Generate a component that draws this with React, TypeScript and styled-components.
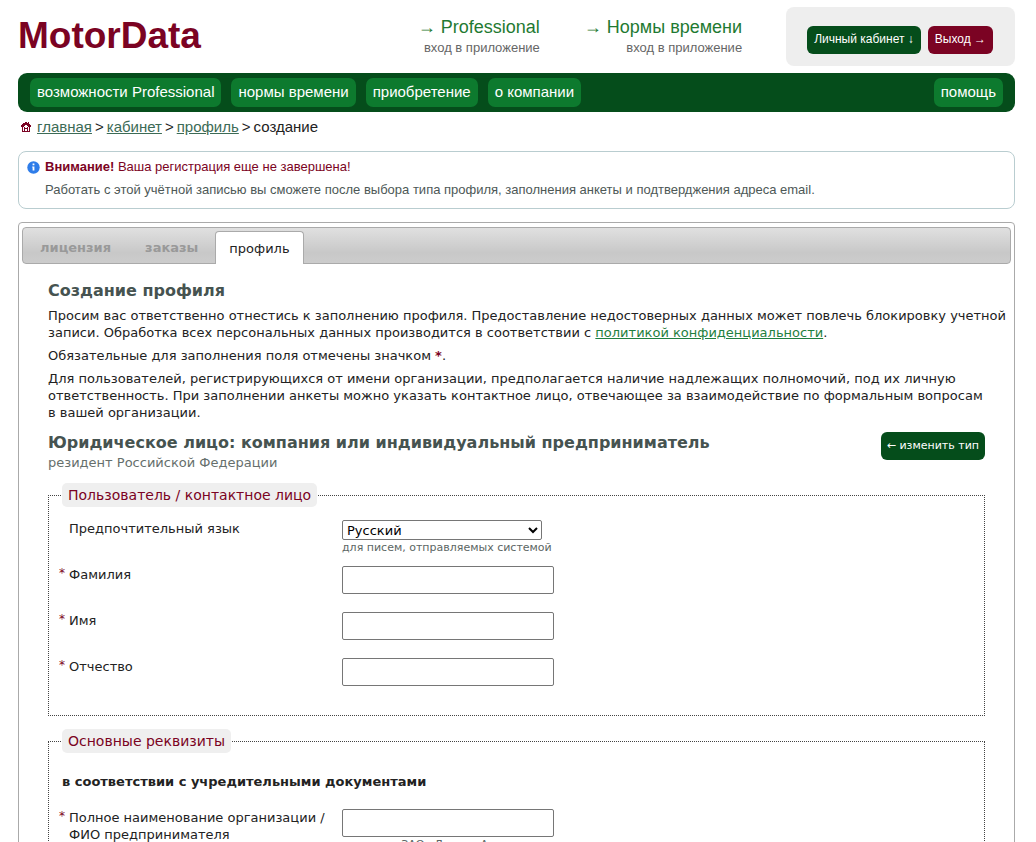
import React from "react";
import styled, { createGlobalStyle } from "styled-components";

const sans = `Arial, "Liberation Sans", sans-serif`;
const wide = `Verdana, "DejaVu Sans", sans-serif`;

const Global = createGlobalStyle`
  *, *::before, *::after { box-sizing: border-box; }
  body { margin: 0; background: #fff; color: #222; font: 13px/17px ${wide}; }
  h1, h2, h3, h4, p, ul, ol { margin: 0; padding: 0; }
  ul, ol { list-style: none; }
`;

const Page = styled.div`
  padding: 7px 21px 24px 18px;
`;

const Header = styled.header`
  display: flex;
  align-items: flex-start;
  font-family: ${sans};
  margin-bottom: 7px;
`;

const Logo = styled.h1`
  flex: 1;
  font-size: 37px;
  line-height: 58px;
  font-weight: bold;
  color: #7b0323;
`;

const AppLink = styled.div`
  text-align: right;
  padding-top: 9px;
  margin-right: 44px;
  white-space: nowrap;
  font-size: 13px;
  line-height: 20px;
  color: #666;
  a {
    display: block;
    font-size: 18px;
    line-height: 22px;
    color: #1f7a32;
    text-decoration: none;
  }
`;

const Account = styled.div`
  display: flex;
  gap: 7px;
  padding: 19px 22px 12px 21px;
  border-radius: 8px;
  background: #eee;
`;

const Button = styled.button<{ $tone?: "red" | "green"; $small?: boolean }>`
  height: 28px;
  padding: ${(p) => (p.$small ? "0 6px 2px" : "0 7px 2px")};
  border: 0;
  border-radius: 6px;
  white-space: nowrap;
  color: #fff;
  background: ${(p) => (p.$tone === "red" ? "#7b0323" : "#054d1b")};
  font: ${(p) => (p.$small ? `11px ${wide}` : `12px ${sans}`)};
`;

const Nav = styled.nav`
  display: flex;
  gap: 10px;
  padding: 5px 12px;
  border-radius: 9px;
  background: #054d1b;
`;

const NavLink = styled.a<{ $end?: boolean }>`
  padding: 0 7px 2px;
  margin-left: ${(p) => (p.$end ? "auto" : "0")};
  border-radius: 7px;
  background: #0d7a2e;
  color: #fff;
  font: 15px/27px ${sans};
  text-decoration: none;
  white-space: nowrap;
`;

const Crumbs = styled.ol`
  display: flex;
  align-items: center;
  padding: 5px 3px;
  font: 15px/20px ${sans};
  svg { margin-right: 6px; display: block; }
  a { color: #3c6b56; }
  li + li::before { content: ">"; margin: 0 3px; }
`;

const Notice = styled.section`
  display: grid;
  grid-template-columns: 13px 1fr;
  column-gap: 5px;
  row-gap: 3px;
  align-items: center;
  margin-top: 9px;
  padding: 5px 8px 8px;
  border: 1px solid #b9cdd0;
  border-radius: 8px;
  font: 13px/20px ${sans};
  p { color: #7b0323; }
  p + p { grid-column: 2; color: #4d5856; }
`;

const Panel = styled.main`
  margin-top: 13px;
  padding: 4px 3px 20px;
  border: 1px solid #aaa;
  border-radius: 4px;
`;

const Tabs = styled.ul`
  display: flex;
  align-items: flex-end;
  height: 37px;
  border: 1px solid #aaa;
  border-radius: 4px;
  background: linear-gradient(#e0e0e0, #c8c8c8 70%, #ccc);
`;

const Tab = styled.li<{ $active?: boolean }>`
  height: 33px;
  padding: 0 ${(p) => (p.$active ? "13px" : "16px")};
  margin-bottom: -1px;
  line-height: ${(p) => (p.$active ? "34px" : "31px")};
  border: 1px solid ${(p) => (p.$active ? "#aaa" : "transparent")};
  border-bottom: 0;
  border-radius: 4px 4px 0 0;
  background: ${(p) => (p.$active ? "#fff" : "transparent")};
  a {
    color: ${(p) => (p.$active ? "#222" : "#999")};
    font-weight: ${(p) => (p.$active ? "normal" : "bold")};
    text-decoration: none;
  }
`;

const Content = styled.div`
  padding: 16px 26px 0;
`;

const Title = styled.h2`
  font-size: 16px;
  line-height: 21px;
  color: #465350;
`;

const Text = styled.p`
  margin-top: 6px;
  white-space: nowrap;
  a { color: #1f8040; }
  b { color: #7b0323; }
`;

const TypeRow = styled.div`
  display: flex;
  justify-content: space-between;
  align-items: flex-start;
  margin: 11px 0 12px;
  color: #666f6c;
  p { margin-top: 1px; }
`;

const Group = styled.fieldset`
  min-width: 0;
  margin: 0 0 13px;
  padding: 13px 13px 11px 10px;
  border: 1px dotted #444;
`;

const Legend = styled.legend`
  margin-left: 3px;
  padding: 0 6px;
  border-radius: 5px;
  background: #efefef;
  color: #7b0323;
  font-size: 14px;
  line-height: 24px;
`;

const Subhead = styled.h4`
  padding: 7px 0 19px 3px;
  font-size: 13px;
  line-height: 17px;
`;

const Row = styled.div`
  display: grid;
  grid-template-columns: 10px 273px 1fr;
  min-height: 46px;
`;

const Star = styled.span`
  color: #7b0323;
  font-size: 12px;
  line-height: 14px;
`;

const Label = styled.label`
  padding-right: 10px;
`;

const Hint = styled.small<{ $center?: boolean }>`
  display: block;
  width: 212px;
  text-align: ${(p) => (p.$center ? "center" : "left")};
  white-space: nowrap;
  font-size: 11px;
  line-height: 15px;
  color: #5c6664;
`;

const Select = styled.select`
  display: block;
  width: 200px;
  height: 20px;
  border: 1px solid #767676;
  border-radius: 2px;
  background: #fff;
  color: #000;
  font: 13px ${wide};
`;

const Input = styled.input`
  display: block;
  width: 212px;
  height: 28px;
  border: 1px solid #767676;
  border-radius: 2px;
  background: #fff;
  font: 13px ${wide};
`;

const HomeIcon = () => (
  <svg width="10" height="10" viewBox="0 0 10 10" aria-hidden="true" shapeRendering="crispEdges" fill="#7b0323">
    <path
      d="M4 0h2v1h1V0h1v2h1v1h1v2H9v5H1V5H0V3h1V2h1V1h2zM4 3v1H3v1H2v4h1V5h1v1h2V5h1v4h1V5H7V4H6V3zM4 7v2h2V7z"
      fillRule="evenodd"
    />
  </svg>
);

const InfoIcon = () => (
  <svg width="13" height="13" viewBox="0 0 13 13" aria-hidden="true">
    <circle cx="6.5" cy="6.5" r="6.2" fill="#2f7de9" />
    <path d="M5.6 2.6h1.8v1.7H5.6zM5.2 5.4h2.2v4.2H5.6V6.6h-.4z" fill="#fff" />
  </svg>
);

const TextRow = ({ id, label, hint }: { id: string; label: React.ReactNode; hint?: string }) => (
  <Row>
    <Star>*</Star>
    <Label htmlFor={id}>{label}</Label>
    <div>
      <Input id={id} type="text" />
      {hint && <Hint $center>{hint}</Hint>}
    </div>
  </Row>
);

export default function App() {
  return (
    <>
      <Global />
      <Page>
        <Header>
          <Logo>MotorData</Logo>
          <AppLink><a href="#professional">→ Professional</a>вход в приложение</AppLink>
          <AppLink><a href="#norms">→ Нормы времени</a>вход в приложение</AppLink>
          <Account>
            <Button type="button">Личный кабинет ↓</Button>
            <Button type="button" $tone="red">Выход →</Button>
          </Account>
        </Header>
        <Nav>
          <NavLink href="#features">возможности Professional</NavLink>
          <NavLink href="#time">нормы времени</NavLink>
          <NavLink href="#buy">приобретение</NavLink>
          <NavLink href="#about">о компании</NavLink>
          <NavLink href="#help" $end>помощь</NavLink>
        </Nav>
        <Crumbs>
          <HomeIcon />
          <li><a href="#main">главная</a></li>
          <li><a href="#cabinet">кабинет</a></li>
          <li><a href="#profile">профиль</a></li>
          <li>создание</li>
        </Crumbs>
        <Notice>
          <InfoIcon />
          <p><b>Внимание!</b> Ваша регистрация еще не завершена!</p>
          <p>Работать с этой учётной записью вы сможете после выбора типа профиля, заполнения анкеты и подтверджения адреса email.</p>
        </Notice>
        <Panel>
          <Tabs>
            <Tab><a href="#license">лицензия</a></Tab>
            <Tab><a href="#orders">заказы</a></Tab>
            <Tab $active><a href="#profile">профиль</a></Tab>
          </Tabs>
          <Content>
            <Title>Создание профиля</Title>
            <Text>
              Просим вас ответственно отнестись к заполнению профиля. Предоставление недостоверных данных может повлечь блокировку учетной
              <br />
              записи. Обработка всех персональных данных производится в соответствии с <a href="#privacy">политикой конфиденциальности</a>.
            </Text>
            <Text>Обязательные для заполнения поля отмечены значком <b>*</b>.</Text>
            <Text>
              Для пользователей, регистрирующихся от имени организации, предполагается наличие надлежащих полномочий, под их личную
              <br />
              ответственность. При заполнении анкеты можно указать контактное лицо, отвечающее за взаимодействие по формальным вопросам
              <br />
              в вашей организации.
            </Text>
            <TypeRow>
              <div>
                <Title as="h3">Юридическое лицо: компания или индивидуальный предприниматель</Title>
                <p>резидент Российской Федерации</p>
              </div>
              <Button type="button" $small>← изменить тип</Button>
            </TypeRow>
            <Group>
              <Legend>Пользователь / контактное лицо</Legend>
              <Row>
                <span />
                <Label htmlFor="lang">Предпочтительный язык</Label>
                <div>
                  <Select id="lang"><option>Русский</option></Select>
                  <Hint>для писем, отправляемых системой</Hint>
                </div>
              </Row>
              <TextRow id="surname" label="Фамилия" />
              <TextRow id="name" label="Имя" />
              <TextRow id="patronymic" label="Отчество" />
            </Group>
            <Group>
              <Legend>Основные реквизиты</Legend>
              <Subhead>в соответствии с учредительными документами</Subhead>
              <TextRow id="company" label="Полное наименование организации / ФИО предпринимателя" hint="ЗАО «Дельта-А»" />
            </Group>
          </Content>
        </Panel>
      </Page>
    </>
  );
}
